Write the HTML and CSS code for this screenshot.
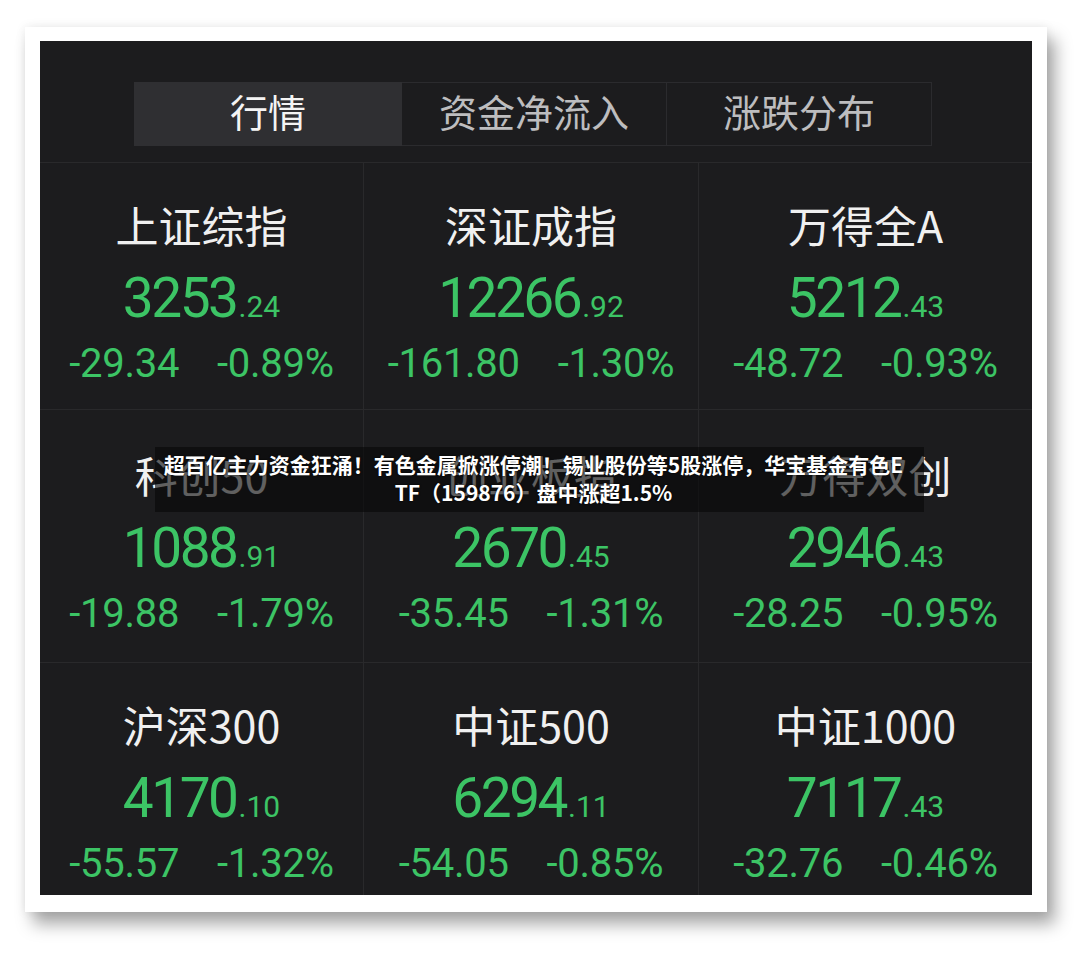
FILE: index.html
```html
<!DOCTYPE html>
<html lang="zh-CN">
<head>
    <meta charset="UTF-8">
    <meta name="viewport" content="width=device-width, initial-scale=1.0">
    <title>行情</title>
    <link rel="stylesheet" href="styles.css">
</head>
<body>
    <div class="photo">
        <div class="screen">
            <!-- Tab bar -->
            <div class="tabs">
                <div class="tab active">行情</div>
                <div class="tab">资金净流入</div>
                <div class="tab">涨跌分布</div>
            </div>

            <!-- Index quotes -->
            <div class="grid">
                <div class="cell">
                    <div class="name">上证综指</div>
                    <div class="price">3253<small>.24</small></div>
                    <div class="change"><span>-29.34</span><span>-0.89%</span></div>
                </div>
                <div class="cell">
                    <div class="name">深证成指</div>
                    <div class="price">12266<small>.92</small></div>
                    <div class="change"><span>-161.80</span><span>-1.30%</span></div>
                </div>
                <div class="cell">
                    <div class="name">万得全A</div>
                    <div class="price">5212<small>.43</small></div>
                    <div class="change"><span>-48.72</span><span>-0.93%</span></div>
                </div>

                <div class="cell">
                    <div class="name">科创50</div>
                    <div class="price">1088<small>.91</small></div>
                    <div class="change"><span>-19.88</span><span>-1.79%</span></div>
                </div>
                <div class="cell">
                    <div class="name">创业板指</div>
                    <div class="price">2670<small>.45</small></div>
                    <div class="change"><span>-35.45</span><span>-1.31%</span></div>
                </div>
                <div class="cell">
                    <div class="name">万得双创</div>
                    <div class="price">2946<small>.43</small></div>
                    <div class="change"><span>-28.25</span><span>-0.95%</span></div>
                </div>

                <div class="cell">
                    <div class="name">沪深300</div>
                    <div class="price">4170<small>.10</small></div>
                    <div class="change"><span>-55.57</span><span>-1.32%</span></div>
                </div>
                <div class="cell">
                    <div class="name">中证500</div>
                    <div class="price">6294<small>.11</small></div>
                    <div class="change"><span>-54.05</span><span>-0.85%</span></div>
                </div>
                <div class="cell">
                    <div class="name">中证1000</div>
                    <div class="price">7117<small>.43</small></div>
                    <div class="change"><span>-32.76</span><span>-0.46%</span></div>
                </div>
            </div>

            <!-- Headline caption -->
            <div class="caption">超百亿主力资金狂涌！有色金属掀涨停潮！锡业股份等5股涨停，华宝基金有色E<br>TF（159876）盘中涨超1.5%</div>
        </div>
    </div>
</body>
</html>
```

FILE: styles.css
```css
body {
    margin: 0;
    min-height: 953px;
    background-color: #ffffff;
    font-family: 'Noto Sans CJK SC', sans-serif;
}

/* White frame around the phone screen */
.photo {
    width: 992px;
    margin: 27px 0 0 25px;
    padding: 14px 15px 17px 15px;
    background: #ffffff;
    box-shadow: 8px 12px 16px rgba(0, 0, 0, 0.35), 0 0 10px rgba(0, 0, 0, 0.08);
}

.screen {
    position: relative;
    height: 854px;
    background-color: #1c1c1e;
    overflow: hidden;
}

/* Tabs */
.tabs {
    display: flex;
    margin-left: 94px;
    padding-top: 41px;
}

.tab {
    width: 264px;
    height: 54px;
    padding-bottom: 8px;
    border: 1px solid #2b2b2e;
    display: flex;
    justify-content: center;
    align-items: center;
    font-size: 38px;
    color: #bdbdbf;
}

.tab + .tab {
    border-left: none;
}

.tab.active {
    width: 266px;
    background-color: #2f2f32;
    border-color: #2f2f32;
    color: #f4f4f4;
}

/* Quote grid */
.grid {
    margin-top: 16px;
    display: grid;
    grid-template-columns: 324px 335px 1fr;
    grid-template-rows: 247px 253px 240px;
    border-top: 1px solid #29292b;
}

.cell {
    display: flex;
    flex-direction: column;
    align-items: center;
    border-bottom: 1px solid #29292b;
    border-right: 1px solid #29292b;
}

.cell:nth-child(3n) {
    border-right: none;
}

/* middle row sits a little lower */
.cell:nth-child(n+4):nth-child(-n+6) {
    padding-top: 3px;
}

.name {
    margin-top: 36px;
    height: 50px;
    line-height: 50px;
    font-size: 43px;
    color: #f0f0f0;
}

.price {
    margin-top: 19px;
    height: 60px;
    line-height: 60px;
    font-family: 'Roboto', sans-serif;
    font-size: 55px;
    letter-spacing: -2.5px;
    color: #3cc465;
}

.price small {
    margin-left: 2px;
    font-size: 30px;
    letter-spacing: 0;
}

.change {
    margin-top: 14px;
    display: flex;
    gap: 38px;
    line-height: 44px;
    font-family: 'Roboto', sans-serif;
    font-size: 40px;
    letter-spacing: -0.3px;
    color: #3cc465;
}

/* Caption strip laid over the screen */
.caption {
    position: absolute;
    left: 115px;
    top: 406px;
    width: 757px;
    height: 62px;
    padding: 3px 12px 0 0;
    background: rgba(8, 8, 8, 0.62);
    text-align: center;
    font-size: 21px;
    font-weight: bold;
    line-height: 28px;
    color: #ffffff;
    text-shadow: 0 0 2px #000000;
}
```
